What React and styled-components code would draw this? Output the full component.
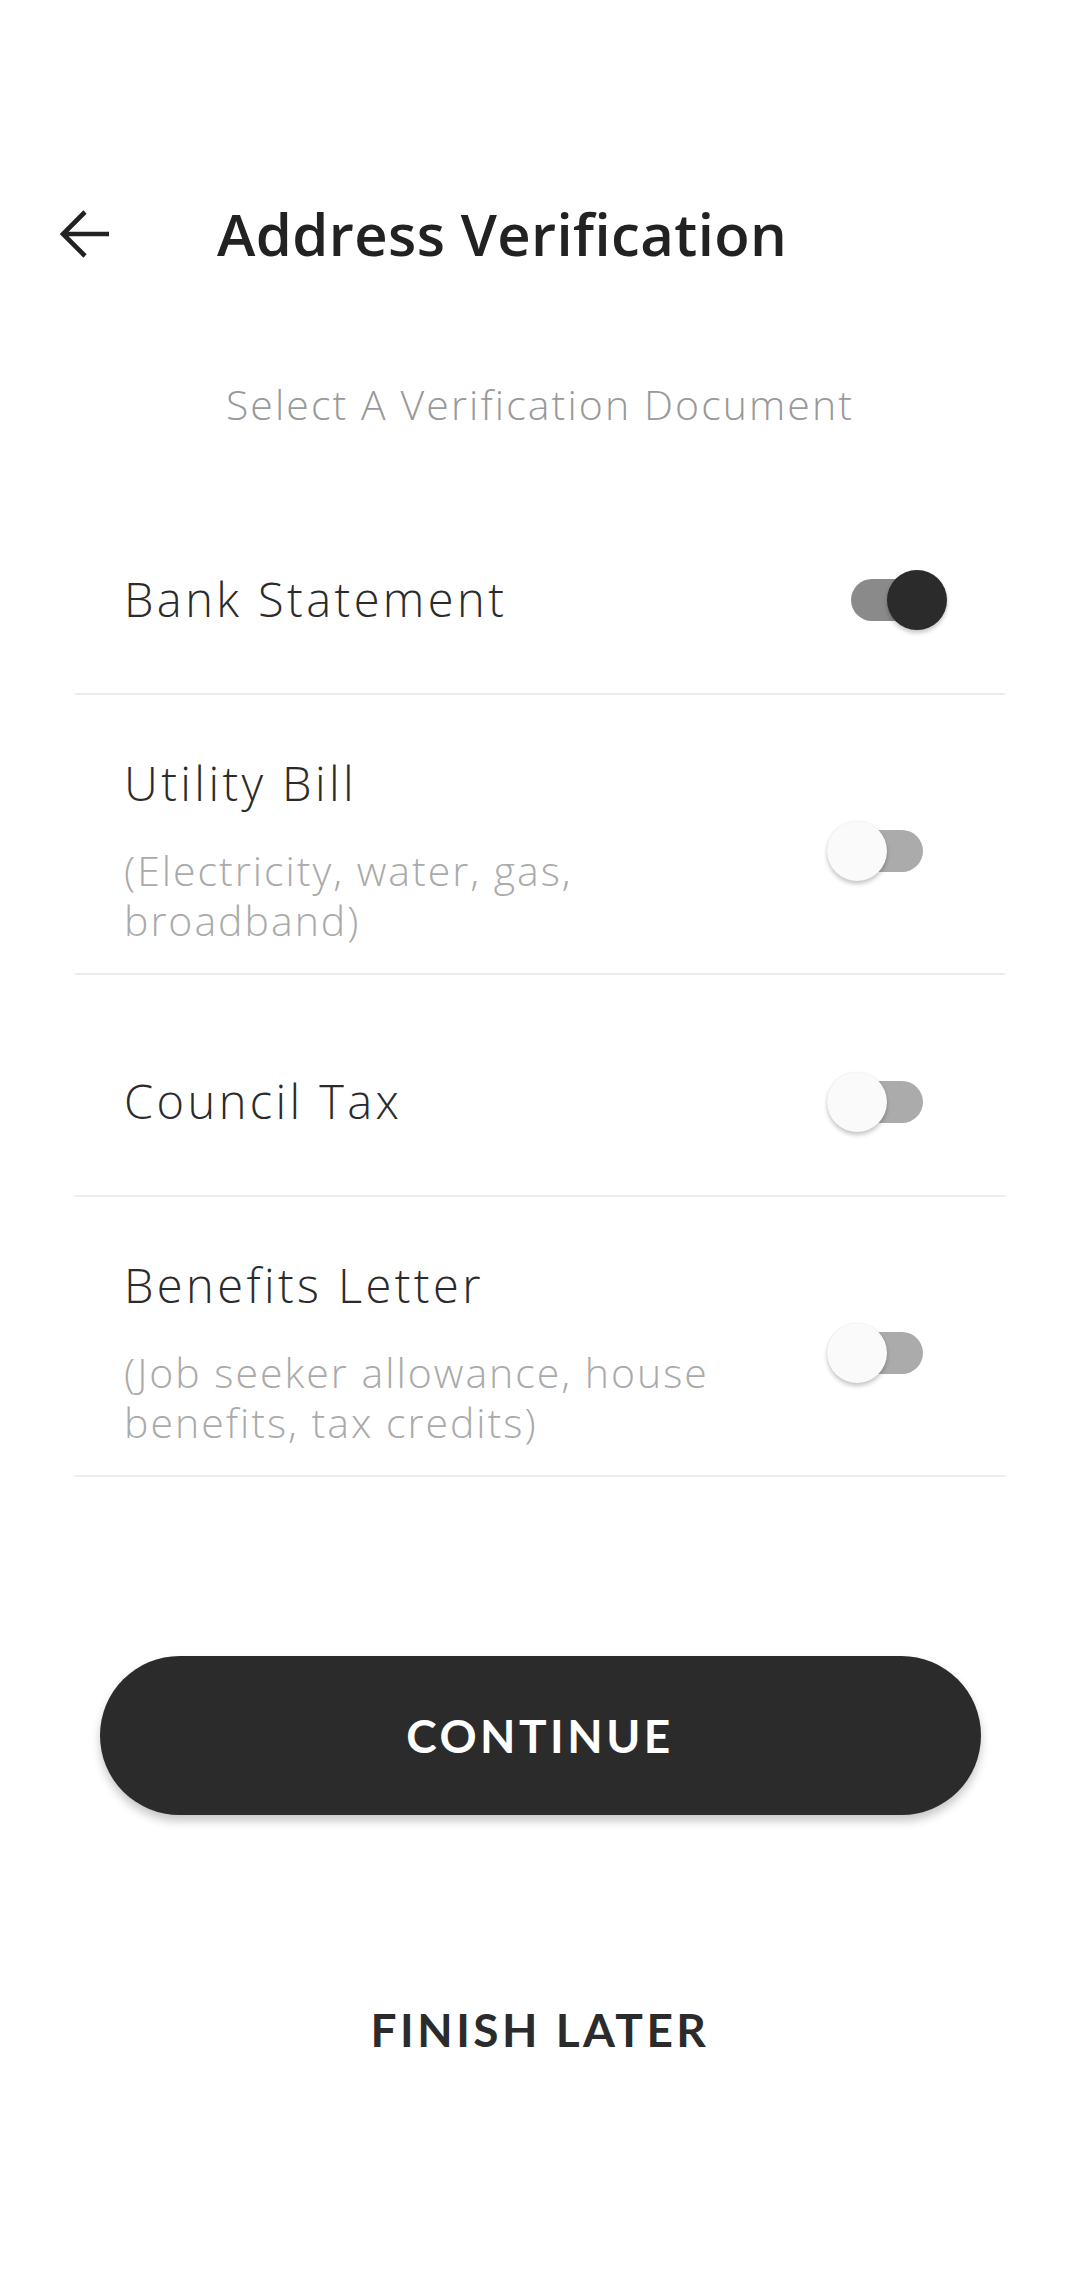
import styled, { createGlobalStyle } from 'styled-components';

const GlobalStyle = createGlobalStyle`
	html, body {
		margin: 0;
		padding: 0;
		background: #ffffff;
	}
	body {
		font-family: 'Open Sans', 'Noto Sans', sans-serif;
		color: #2b2b2b;
	}
	* {
		box-sizing: border-box;
	}
`;

const documents = [
	{ id: 'bank', title: 'Bank Statement', checked: true },
	{
		id: 'utility',
		title: 'Utility Bill',
		note: '(Electricity, water, gas, broadband)'
	},
	{ id: 'council', title: 'Council Tax' },
	{
		id: 'benefits',
		title: 'Benefits Letter',
		note: '(Job seeker allowance, house benefits, tax credits)'
	}
];

const BackArrow = () => (
	<svg width="52" height="50" viewBox="0 0 52 50" fill="none">
		<path
			d="M50 25H5M26 3L4 25l22 22"
			stroke="#222222"
			strokeWidth="4.6"
			strokeLinecap="butt"
			strokeLinejoin="miter"
		/>
	</svg>
);

const Toggle = ({ checked }) => (
	<SwitchBox>
		<Track $checked={checked} />
		<Thumb $checked={checked} />
	</SwitchBox>
);

const App = () => {
	return (
		<Page>
			<GlobalStyle />
			<Header>
				<BackButton>
					<BackArrow />
				</BackButton>
				<Title>Address Verification</Title>
			</Header>
			<Subtitle>Select A Verification Document</Subtitle>
			<List>
				{documents.map((doc) => (
					<Row key={doc.id} $tall={!!doc.note}>
						<RowText>
							<RowTitle>{doc.title}</RowTitle>
							{doc.note && <RowNote>{doc.note}</RowNote>}
						</RowText>
						<Toggle checked={doc.checked} />
					</Row>
				))}
			</List>
			<ContinueButton>CONTINUE</ContinueButton>
			<LaterButton>FINISH LATER</LaterButton>
		</Page>
	);
};

const Page = styled.main`
	width: 1080px;
	min-height: 2280px;
	padding-top: 186px;
	display: flex;
	flex-direction: column;
	background: #ffffff;
`;

const Header = styled.header`
	height: 96px;
	display: flex;
	align-items: center;
`;

const BackButton = styled.button`
	width: 52px;
	height: 50px;
	margin-left: 59px;
	padding: 0;
	border: none;
	background: transparent;
	display: flex;
	align-items: center;
	justify-content: center;
`;

const Title = styled.h1`
	margin: 0 0 0 106px;
	font-size: 58px;
	font-weight: 600;
	line-height: 70px;
	color: #222222;
	letter-spacing: 0.4px;
`;

const Subtitle = styled.p`
	margin: 98px 0 0;
	text-align: center;
	font-size: 41px;
	font-weight: 300;
	line-height: 48px;
	color: #999999;
	letter-spacing: 2.1px;
`;

const List = styled.section`
	margin: 45px 75px 0;
	display: flex;
	flex-direction: column;
`;

const Row = styled.div`
	height: ${({ $tall }) => ($tall ? '280px' : '222px')};
	padding: 34px 58px 0 49px;
	border-bottom: 2px solid #ececec;
	display: flex;
	align-items: center;
	justify-content: space-between;
`;

const RowText = styled.div`
	display: flex;
	flex-direction: column;
	max-width: 615px;
	margin-top: -2px;
`;

const RowTitle = styled.span`
	font-size: 47px;
	font-weight: 300;
	line-height: 56px;
	color: #2b2b2b;
	letter-spacing: 3.4px;
`;

const RowNote = styled.span`
	margin-top: 34px;
	font-size: 41px;
	font-weight: 300;
	line-height: 50px;
	color: #aaaaaa;
	letter-spacing: 2px;
`;

const SwitchBox = styled.div`
	position: relative;
	width: 120px;
	height: 64px;
	flex-shrink: 0;
`;

const Track = styled.div`
	position: absolute;
	left: 24px;
	top: 11px;
	width: 72px;
	height: 42px;
	border-radius: 21px;
	background: ${({ $checked }) => ($checked ? '#8a8a8a' : '#ababab')};
`;

const Thumb = styled.div`
	position: absolute;
	top: 2px;
	left: ${({ $checked }) => ($checked ? '60px' : '0')};
	width: 60px;
	height: 60px;
	border-radius: 50%;
	background: ${({ $checked }) => ($checked ? '#2b2b2b' : '#fafafa')};
	box-shadow: 0 3px 4px rgba(0, 0, 0, 0.22), 0 0 1px rgba(0, 0, 0, 0.12);
`;

const ContinueButton = styled.button`
	align-self: center;
	width: 881px;
	height: 159px;
	margin-top: 179px;
	border: none;
	border-radius: 80px;
	background: #2b2b2b;
	color: #ffffff;
	font-family: 'Lato', 'Noto Sans', sans-serif;
	font-size: 46px;
	font-weight: 700;
	letter-spacing: 3.5px;
	box-shadow: 0 6px 10px rgba(0, 0, 0, 0.22);
`;

const LaterButton = styled.button`
	align-self: center;
	margin-top: 187px;
	padding: 0 20px;
	border: none;
	background: transparent;
	color: #2b2b2b;
	font-family: 'Lato', 'Noto Sans', sans-serif;
	font-size: 46px;
	font-weight: 700;
	line-height: 56px;
	letter-spacing: 3.5px;
`;

export default App;
